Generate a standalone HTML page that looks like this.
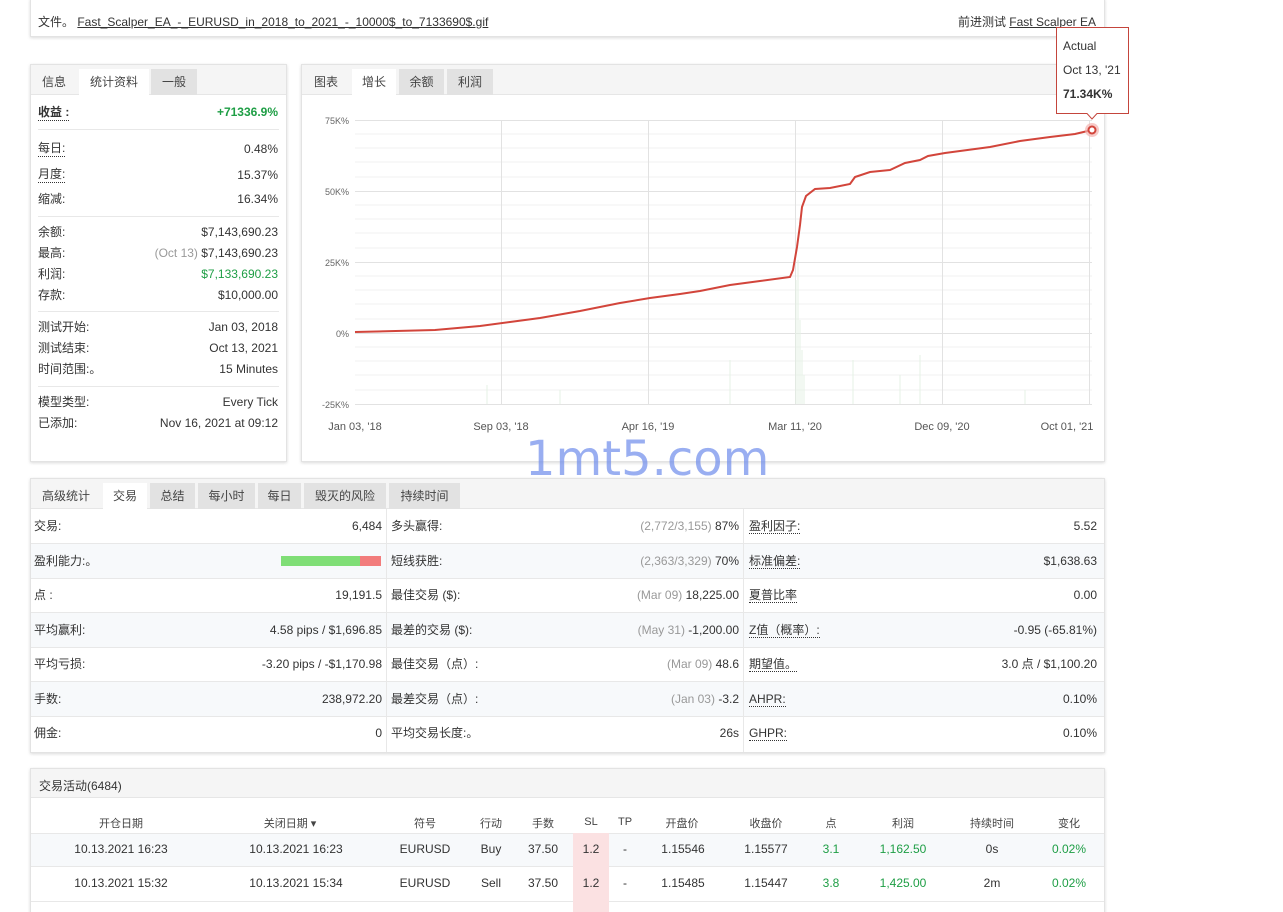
<!DOCTYPE html>
<html><head><meta charset="utf-8"><style>
*{box-sizing:border-box;margin:0;padding:0}
html,body{width:1283px;height:912px;overflow:hidden}
body{background:#fff;font-family:"Liberation Sans","Noto Sans CJK SC",sans-serif;font-size:12px;color:#333;position:relative}
.a{position:absolute;white-space:nowrap}
.panel{position:absolute;background:#fff;border:1px solid #e3e3e3;box-shadow:0 1px 3px rgba(0,0,0,.15);overflow:hidden}
.tabs{position:absolute;left:0;top:0;right:0;height:30px;background:#f5f5f5;border-bottom:1px solid #e6e6e6}
.tab{position:absolute;top:4px;height:26px;line-height:26px;text-align:center;background:#e2e2e2;color:#444;font-size:12px}
.tab.on{background:#fff}
.tab.pl{background:transparent}
.dot{border-bottom:1px dotted #333}
.g{color:#1e9e45}
.gr{color:#999}
.hr{position:absolute;height:1px;background:#e8e8e8}
.row{position:absolute;left:0;width:1073px;height:35px;border-bottom:1px solid #e8e8e8;line-height:34px}
.row.alt{background:#f7f9fb}
.c{position:absolute;top:0;height:34px}
.c1{left:3px}.v1{right:722px;text-align:right}
.c2{left:360px}.v2{right:365px;text-align:right}
.c3{left:718px}.v3{right:7px;text-align:right}
</style></head><body>

<div class="panel" style="left:30px;top:-2px;width:1075px;height:39px">
<div class="a" style="left:7px;top:14px">文件。 <span style="text-decoration:underline">Fast_Scalper_EA_-_EURUSD_in_2018_to_2021_-_10000$_to_7133690$.gif</span></div>
<div class="a" style="right:8px;top:14px">前进测试 <span style="text-decoration:underline">Fast Scalper EA</span></div>
</div>

<div class="panel" style="left:30px;top:64px;width:257px;height:398px">
<div class="tabs"><div class="tab pl" style="left:0;width:46px">信息</div><div class="tab on" style="left:48px;width:70px">统计资料</div><div class="tab" style="left:120px;width:46px">一般</div></div>
<div class="a dot" style="left:7px;top:38px;font-weight:bold">收益 :</div><div class="a g" style="right:8px;top:40px;font-weight:bold">+71336.9%</div>
<div class="hr" style="left:7px;right:7px;top:64px"></div>
<div class="a dot" style="left:7px;top:74px">每日:</div><div class="a" style="right:8px;top:77px">0.48%</div>
<div class="a dot" style="left:7px;top:100px">月度:</div><div class="a" style="right:8px;top:103px">15.37%</div>
<div class="a" style="left:7px;top:125px">缩减:</div><div class="a" style="right:8px;top:127px">16.34%</div>
<div class="hr" style="left:7px;right:7px;top:151px"></div>
<div class="a" style="left:7px;top:158px">余额:</div><div class="a" style="right:8px;top:160px">$7,143,690.23</div>
<div class="a" style="left:7px;top:179px">最高:</div><div class="a" style="right:8px;top:181px"><span class="gr">(Oct 13)</span> $7,143,690.23</div>
<div class="a" style="left:7px;top:200px">利润:</div><div class="a g" style="right:8px;top:202px">$7,133,690.23</div>
<div class="a" style="left:7px;top:221px">存款:</div><div class="a" style="right:8px;top:223px">$10,000.00</div>
<div class="hr" style="left:7px;right:7px;top:246px"></div>
<div class="a" style="left:7px;top:253px">测试开始:</div><div class="a" style="right:8px;top:255px">Jan 03, 2018</div>
<div class="a" style="left:7px;top:274px">测试结束:</div><div class="a" style="right:8px;top:276px">Oct 13, 2021</div>
<div class="a" style="left:7px;top:295px">时间范围:。</div><div class="a" style="right:8px;top:297px">15 Minutes</div>
<div class="hr" style="left:7px;right:7px;top:321px"></div>
<div class="a" style="left:7px;top:328px">模型类型:</div><div class="a" style="right:8px;top:330px">Every Tick</div>
<div class="a" style="left:7px;top:349px">已添加:</div><div class="a" style="right:8px;top:351px">Nov 16, 2021 at 09:12</div>
</div>

<div class="panel" style="left:301px;top:64px;width:804px;height:398px">
<div class="tabs"><div class="tab pl" style="left:0;width:48px">图表</div><div class="tab on" style="left:50px;width:44px">增长</div><div class="tab" style="left:97px;width:45px">余额</div><div class="tab" style="left:145px;width:46px">利润</div></div>
</div>
<svg class="a" style="left:0;top:0" width="1283" height="470">
<g stroke="#f0f0f0" stroke-width="1">
<line x1="355" y1="134" x2="1092" y2="134"/><line x1="355" y1="148" x2="1092" y2="148"/><line x1="355" y1="162" x2="1092" y2="162"/><line x1="355" y1="177" x2="1092" y2="177"/>
<line x1="355" y1="205" x2="1092" y2="205"/><line x1="355" y1="219" x2="1092" y2="219"/><line x1="355" y1="233" x2="1092" y2="233"/><line x1="355" y1="248" x2="1092" y2="248"/>
<line x1="355" y1="276" x2="1092" y2="276"/><line x1="355" y1="290" x2="1092" y2="290"/><line x1="355" y1="304" x2="1092" y2="304"/><line x1="355" y1="319" x2="1092" y2="319"/>
<line x1="355" y1="347" x2="1092" y2="347"/><line x1="355" y1="361" x2="1092" y2="361"/><line x1="355" y1="375" x2="1092" y2="375"/><line x1="355" y1="390" x2="1092" y2="390"/>
</g>
<g stroke="#e2e2e2" stroke-width="1">
<line x1="355" y1="120.5" x2="1092" y2="120.5"/><line x1="355" y1="191.5" x2="1092" y2="191.5"/><line x1="355" y1="262.5" x2="1092" y2="262.5"/><line x1="355" y1="333.5" x2="1092" y2="333.5"/><line x1="355" y1="404.5" x2="1092" y2="404.5"/>
<line x1="501.5" y1="120" x2="501.5" y2="404"/><line x1="648.5" y1="120" x2="648.5" y2="404"/><line x1="795.5" y1="120" x2="795.5" y2="404"/><line x1="942.5" y1="120" x2="942.5" y2="404"/><line x1="1089.5" y1="120" x2="1089.5" y2="404"/>
</g>
<g stroke="#e4f2e4" stroke-width="1">
<line x1="796" y1="404" x2="796" y2="280"/><line x1="798" y1="404" x2="798" y2="260"/><line x1="800" y1="404" x2="800" y2="320"/><line x1="802" y1="404" x2="802" y2="350"/><line x1="804" y1="404" x2="804" y2="375"/>
<line x1="487" y1="404" x2="487" y2="385"/><line x1="560" y1="404" x2="560" y2="390"/><line x1="730" y1="404" x2="730" y2="360"/><line x1="853" y1="404" x2="853" y2="360"/><line x1="900" y1="404" x2="900" y2="375"/><line x1="920" y1="404" x2="920" y2="355"/><line x1="1025" y1="404" x2="1025" y2="390"/>
</g>
<g font-family="Liberation Sans" font-size="9" fill="#666" text-anchor="end">
<text x="349" y="124">75K%</text><text x="349" y="195">50K%</text><text x="349" y="266">25K%</text><text x="349" y="337">0%</text><text x="349" y="408">-25K%</text></g>
<g font-family="Liberation Sans" font-size="11" fill="#555" text-anchor="middle">
<text x="355" y="430">Jan 03, '18</text><text x="501" y="430">Sep 03, '18</text><text x="648" y="430">Apr 16, '19</text><text x="795" y="430">Mar 11, '20</text><text x="942" y="430">Dec 09, '20</text><text x="1067" y="430">Oct 01, '21</text></g>
<polyline fill="none" stroke="#d2453b" stroke-width="2" points="355,332 435,330 480,326 510,322 540,318 580,311 620,303 650,298 680,294 700,291 730,285 760,281 790,277 793,270 797,247 800,225 802,207 806,196 815,189 830,188 850,184 855,177 870,172 890,170 905,163 920,160 928,156 945,153 960,151 990,147 1020,141 1050,137 1075,134 1092,130"/>
<circle cx="1092" cy="130" r="7" fill="#f4b4b0" opacity=".7"/><circle cx="1092" cy="130" r="3.5" fill="#fff" stroke="#d2453b" stroke-width="2"/>
<path d="M1056.5 27.5 H1128.5 V113.5 H1097 L1092 119 L1087 113.5 H1056.5Z" fill="#fff" stroke="#c4453c"/>
<text x="1063" y="50" font-family="Liberation Sans" font-size="12" fill="#333">Actual</text>
<text x="1063" y="74" font-family="Liberation Sans" font-size="12" fill="#333">Oct 13, '21</text>
<text x="1063" y="98" font-family="Liberation Sans" font-size="12" font-weight="bold" fill="#333">71.34K%</text>
</svg>

<div class="panel" style="left:30px;top:478px;width:1075px;height:275px">
<div class="tabs"><div class="tab pl" style="left:0;width:70px">高级统计</div><div class="tab on" style="left:72px;width:44px">交易</div><div class="tab" style="left:119px;width:45px">总结</div><div class="tab" style="left:167px;width:57px">每小时</div><div class="tab" style="left:227px;width:43px">每日</div><div class="tab" style="left:273px;width:82px">毁灭的风险</div><div class="tab" style="left:358px;width:71px">持续时间</div></div>
<div class="row" style="top:30px"><span class="c c1">交易:</span><span class="c v1">6,484</span><span class="c c2">多头赢得:</span><span class="c v2"><span class="gr">(2,772/3,155)</span> 87%</span><span class="c c3"><span class="dot">盈利因子:</span></span><span class="c v3">5.52</span></div>
<div class="row alt" style="top:64.5px"><span class="c c1">盈利能力:。</span><span class="c" style="left:250px;top:12px;width:79px;height:10px;background:#7fde76"></span><span class="c" style="left:329px;top:12px;width:21px;height:10px;background:#f27c7c"></span><span class="c c2">短线获胜:</span><span class="c v2"><span class="gr">(2,363/3,329)</span> 70%</span><span class="c c3"><span class="dot">标准偏差:</span></span><span class="c v3">$1,638.63</span></div>
<div class="row" style="top:99px"><span class="c c1">点 :</span><span class="c v1">19,191.5</span><span class="c c2">最佳交易 ($):</span><span class="c v2"><span class="gr">(Mar 09)</span> 18,225.00</span><span class="c c3"><span class="dot">夏普比率</span></span><span class="c v3">0.00</span></div>
<div class="row alt" style="top:133.5px"><span class="c c1">平均赢利:</span><span class="c v1">4.58 pips / $1,696.85</span><span class="c c2">最差的交易 ($):</span><span class="c v2"><span class="gr">(May 31)</span> -1,200.00</span><span class="c c3"><span class="dot">Z值（概率）:</span></span><span class="c v3">-0.95 (-65.81%)</span></div>
<div class="row" style="top:168px"><span class="c c1">平均亏损:</span><span class="c v1">-3.20 pips / -$1,170.98</span><span class="c c2">最佳交易（点）:</span><span class="c v2"><span class="gr">(Mar 09)</span> 48.6</span><span class="c c3"><span class="dot">期望值。</span></span><span class="c v3">3.0 点 / $1,100.20</span></div>
<div class="row alt" style="top:202.5px"><span class="c c1">手数:</span><span class="c v1">238,972.20</span><span class="c c2">最差交易（点）:</span><span class="c v2"><span class="gr">(Jan 03)</span> -3.2</span><span class="c c3"><span class="dot">AHPR:</span></span><span class="c v3">0.10%</span></div>
<div class="row" style="top:237px;border-bottom:0"><span class="c c1">佣金:</span><span class="c v1">0</span><span class="c c2">平均交易长度:。</span><span class="c v2">26s</span><span class="c c3"><span class="dot">GHPR:</span></span><span class="c v3">0.10%</span></div>
<div class="a" style="left:355px;top:30px;width:1px;height:245px;background:#e8e8e8"></div>
<div class="a" style="left:712px;top:30px;width:1px;height:245px;background:#e8e8e8"></div>
</div>

<div class="panel" style="left:30px;top:768px;width:1075px;height:160px">
<div class="a" style="left:0;top:0;width:1073px;height:29px;background:#f5f5f5;border-bottom:1px solid #e6e6e6"></div>
<div class="a" style="left:8px;top:8px">交易活动(6484)</div>
<div class="a" style="left:0;top:64px;width:1073px;height:34px;background:#f7f9fb;border-top:1px solid #e8e8e8;border-bottom:1px solid #e8e8e8"></div>
<div class="a" style="left:0;top:132px;width:1073px;height:1px;background:#e8e8e8"></div>
<div class="a" style="left:542px;top:64px;width:36px;height:100px;background:#fbe1e2"></div>
</div>
<div class="a" style="top:815px;left:0;width:1283px;font-size:11px;color:#444">
<span class="a" style="left:121px;transform:translateX(-50%)">开仓日期</span>
<span class="a" style="left:290px;transform:translateX(-50%)">关闭日期 ▾</span>
<span class="a" style="left:425px;transform:translateX(-50%)">符号</span>
<span class="a" style="left:491px;transform:translateX(-50%)">行动</span>
<span class="a" style="left:543px;transform:translateX(-50%)">手数</span>
<span class="a" style="left:591px;transform:translateX(-50%);top:1px">SL</span>
<span class="a" style="left:625px;transform:translateX(-50%);top:1px">TP</span>
<span class="a" style="left:682px;transform:translateX(-50%)">开盘价</span>
<span class="a" style="left:766px;transform:translateX(-50%)">收盘价</span>
<span class="a" style="left:831px;transform:translateX(-50%)">点</span>
<span class="a" style="left:903px;transform:translateX(-50%)">利润</span>
<span class="a" style="left:992px;transform:translateX(-50%)">持续时间</span>
<span class="a" style="left:1069px;transform:translateX(-50%)">变化</span>
</div>
<div class="a" style="top:842px;left:0;width:1283px">
<span class="a" style="left:121px;transform:translateX(-50%)">10.13.2021 16:23</span>
<span class="a" style="left:296px;transform:translateX(-50%)">10.13.2021 16:23</span>
<span class="a" style="left:425px;transform:translateX(-50%)">EURUSD</span>
<span class="a" style="left:491px;transform:translateX(-50%)">Buy</span>
<span class="a" style="left:543px;transform:translateX(-50%)">37.50</span>
<span class="a" style="left:591px;transform:translateX(-50%)">1.2</span>
<span class="a" style="left:625px;transform:translateX(-50%)">-</span>
<span class="a" style="left:683px;transform:translateX(-50%)">1.15546</span>
<span class="a" style="left:766px;transform:translateX(-50%)">1.15577</span>
<span class="a g" style="left:831px;transform:translateX(-50%)">3.1</span>
<span class="a g" style="left:903px;transform:translateX(-50%)">1,162.50</span>
<span class="a" style="left:992px;transform:translateX(-50%)">0s</span>
<span class="a g" style="left:1069px;transform:translateX(-50%)">0.02%</span>
</div>
<div class="a" style="top:876px;left:0;width:1283px">
<span class="a" style="left:121px;transform:translateX(-50%)">10.13.2021 15:32</span>
<span class="a" style="left:296px;transform:translateX(-50%)">10.13.2021 15:34</span>
<span class="a" style="left:425px;transform:translateX(-50%)">EURUSD</span>
<span class="a" style="left:491px;transform:translateX(-50%)">Sell</span>
<span class="a" style="left:543px;transform:translateX(-50%)">37.50</span>
<span class="a" style="left:591px;transform:translateX(-50%)">1.2</span>
<span class="a" style="left:625px;transform:translateX(-50%)">-</span>
<span class="a" style="left:683px;transform:translateX(-50%)">1.15485</span>
<span class="a" style="left:766px;transform:translateX(-50%)">1.15447</span>
<span class="a g" style="left:831px;transform:translateX(-50%)">3.8</span>
<span class="a g" style="left:903px;transform:translateX(-50%)">1,425.00</span>
<span class="a" style="left:992px;transform:translateX(-50%)">2m</span>
<span class="a g" style="left:1069px;transform:translateX(-50%)">0.02%</span>
</div>

<div class="a" style="left:525px;top:431px;font-size:48px;color:rgba(110,140,235,.7);font-family:'DejaVu Sans',sans-serif">1mt5.com</div>
</body></html>
